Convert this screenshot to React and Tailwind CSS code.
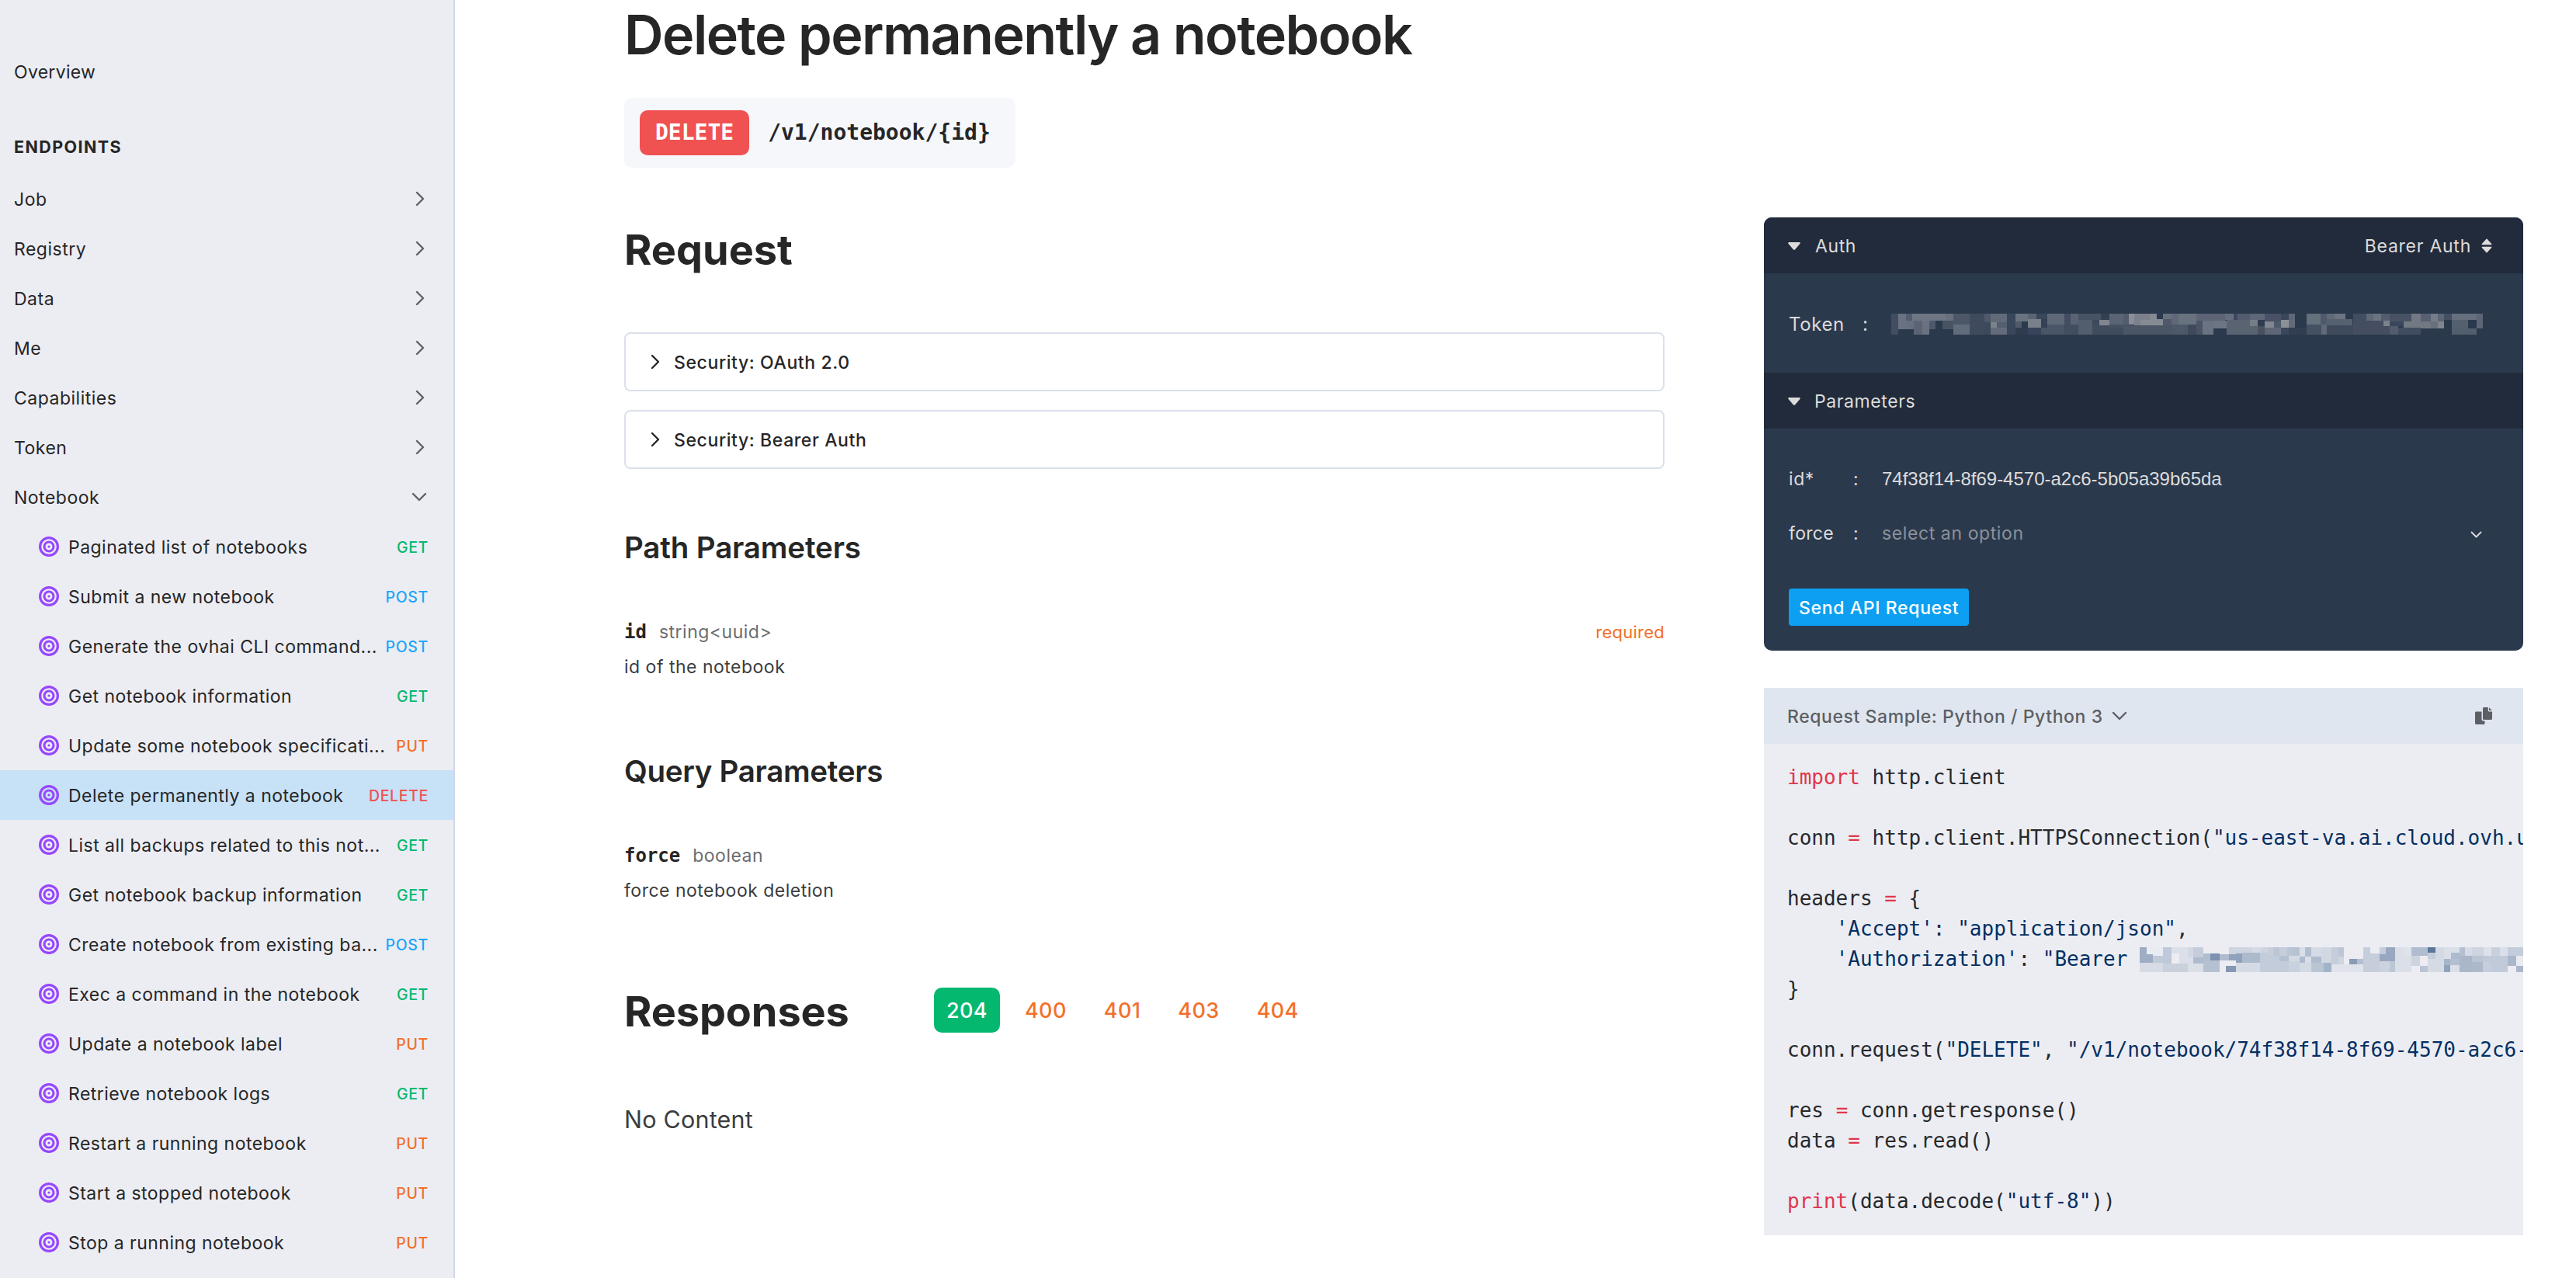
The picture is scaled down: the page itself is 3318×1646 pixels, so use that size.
import React from "react";

const groups = ["Job", "Registry", "Data", "Me", "Capabilities", "Token"];

const endpoints = [
  { name: "Paginated list of notebooks", method: "GET" },
  { name: "Submit a new notebook", method: "POST" },
  { name: "Generate the ovhai CLI command...", method: "POST" },
  { name: "Get notebook information", method: "GET" },
  { name: "Update some notebook specificati...", method: "PUT" },
  { name: "Delete permanently a notebook", method: "DELETE", active: true },
  { name: "List all backups related to this not...", method: "GET" },
  { name: "Get notebook backup information", method: "GET" },
  { name: "Create notebook from existing ba...", method: "POST" },
  { name: "Exec a command in the notebook", method: "GET" },
  { name: "Update a notebook label", method: "PUT" },
  { name: "Retrieve notebook logs", method: "GET" },
  { name: "Restart a running notebook", method: "PUT" },
  { name: "Start a stopped notebook", method: "PUT" },
  { name: "Stop a running notebook", method: "PUT" },
];

const methodColors = {
  GET: "text-[#05b870]",
  POST: "text-[#1ea5fc]",
  PUT: "text-[#f3702a]",
  DELETE: "text-[#f05252]",
};

// Each code line is a list of [kind, text] tokens
const codeLines = [
  [["kw", "import"], ["", " http.client"]],
  [],
  [["", "conn "], ["kw", "="], ["", " http.client.HTTPSConnection("], ["str", '"us-east-va.ai.cloud.ovh.us"'], ["", ")"]],
  [],
  [["", "headers "], ["kw", "="], ["", " {"]],
  [["", "    "], ["str", "'Accept'"], ["", ": "], ["str", '"application/json"'], ["", ","]],
  [["", "    "], ["str", "'Authorization'"], ["", ": "], ["str", '"Bearer '], ["hidden", ""]],
  [["", "}"]],
  [],
  [["", "conn.request("], ["str", '"DELETE"'], ["", ", "], ["str", '"/v1/notebook/74f38f14-8f69-4570-a2c6-5b05a39b65da"'], ["", ")"]],
  [],
  [["", "res "], ["kw", "="], ["", " conn.getresponse()"]],
  [["", "data "], ["kw", "="], ["", " res.read()"]],
  [],
  [["kw", "print"], ["", "(data.decode("], ["str", '"utf-8"'], ["", "))"]],
];

const tokenColors = {
  "": "text-[#26292c]",
  kw: "text-[#e0364a]",
  str: "text-[#032f62]",
};

// Pixelated tokens: [x1, y1, x2, y2, color]
const darkTiles = [
  [12, 30, 30, 110, "#414d60"], [30, 30, 50, 90, "#6a7281"], [50, 30, 66, 57, "#525d6f"], [50, 57, 70, 90, "#667080"],
  [66, 30, 152, 57, "#6f7683"], [152, 30, 173, 57, "#686f7e"], [70, 57, 92, 110, "#5a6475"], [92, 57, 111, 110, "#6a7281"],
  [111, 57, 127, 90, "#4e5a6b"], [145, 57, 173, 90, "#485363"], [173, 30, 215, 72, "#4b5767"], [173, 72, 215, 110, "#626b7a"],
  [215, 30, 253, 110, "#3f4b5d"], [253, 30, 269, 63, "#4e596b"], [253, 63, 269, 110, "#3c485b"], [269, 30, 312, 63, "#606a79"],
  [269, 63, 286, 84, "#7b828c"], [286, 63, 312, 84, "#535e6e"], [269, 84, 312, 110, "#636b7a"], [312, 30, 334, 110, "#3a465a"],
  [334, 30, 366, 60, "#6a7480"], [334, 60, 350, 84, "#4f5a6b"], [334, 84, 366, 110, "#2f3c50"], [366, 30, 388, 51, "#5a6473"],
  [366, 51, 400, 84, "#78808a"], [366, 84, 400, 110, "#36435a"], [388, 30, 416, 51, "#3a475b"], [400, 51, 416, 84, "#344156"],
  [416, 30, 460, 70, "#5e6877"], [400, 84, 416, 110, "#4a5667"], [416, 70, 460, 110, "#4a5667"], [460, 30, 476, 70, "#424d62"],
  [476, 30, 497, 70, "#596374"], [460, 70, 497, 110, "#414d60"], [497, 30, 555, 55, "#475364"], [497, 55, 533, 110, "#525d6d"],
  [533, 54, 551, 110, "#3d495c"], [555, 30, 577, 54, "#333f54"], [551, 54, 577, 75, "#7f868e"], [533, 75, 613, 110, "#404c5e"],
  [577, 30, 613, 72, "#5a6475"], [613, 30, 627, 72, "#525c6f"], [577, 72, 627, 84, "#465162"], [627, 30, 642, 72, "#8a8f97"],
  [642, 30, 681, 75, "#7b808a"], [681, 30, 700, 54, "#858a92"], [613, 75, 780, 110, "#4a5566"], [657, 51, 716, 75, "#858b92"],
  [642, 30, 681, 54, "#7b808a"], [700, 30, 716, 51, "#2b394d"], [716, 30, 738, 51, "#69717f"], [716, 51, 738, 75, "#4e5869"],
  [738, 30, 755, 72, "#5f6878"], [755, 30, 802, 72, "#69727f"], [738, 72, 780, 110, "#4d5869"], [780, 72, 802, 110, "#3e4a5c"],
  [802, 30, 876, 57, "#5c6476"], [876, 30, 899, 54, "#656e7c"], [802, 57, 818, 110, "#4a5466"], [818, 57, 846, 110, "#6a7382"],
  [846, 57, 880, 87, "#6c7581"], [899, 30, 908, 54, "#3c485c"], [908, 30, 940, 54, "#515c6e"], [940, 30, 979, 54, "#5d6777"],
  [880, 54, 961, 110, "#5a6371"], [941, 54, 961, 78, "#757d87"], [961, 54, 979, 78, "#2f3c50"], [961, 78, 979, 110, "#48515f"],
  [979, 30, 1021, 60, "#485166"], [979, 60, 1003, 84, "#808790"], [1003, 60, 1021, 84, "#4e5969"], [979, 84, 1021, 110, "#5f6777"],
  [1021, 30, 1041, 54, "#3a465c"], [1021, 54, 1041, 84, "#8a9096"], [1021, 84, 1041, 110, "#3a465c"], [1041, 30, 1058, 54, "#5f6877"],
  [1041, 54, 1058, 84, "#626b78"], [1041, 84, 1088, 110, "#303d52"], [1088, 30, 1124, 72, "#64707c"], [1088, 72, 1126, 110, "#455163"],
  [1124, 30, 1140, 72, "#4e5a6c"], [1126, 72, 1140, 110, "#5f6977"], [1140, 30, 1160, 51, "#5f6978"], [1160, 30, 1188, 51, "#6c7580"],
  [1140, 51, 1206, 75, "#56616f"], [1140, 75, 1208, 110, "#3f4b5d"], [1208, 30, 1242, 57, "#414d62"], [1208, 57, 1303, 110, "#454e61"],
  [1242, 30, 1260, 57, "#5f6977"], [1260, 30, 1281, 57, "#6b7480"], [1281, 30, 1303, 57, "#535d6f"], [1287, 57, 1303, 78, "#7b828c"],
  [1303, 30, 1359, 60, "#475265"], [1303, 78, 1325, 110, "#525c6d"], [1303, 60, 1339, 78, "#3a465b"], [1325, 84, 1383, 110, "#414c60"],
  [1359, 30, 1383, 60, "#727985"], [1383, 30, 1409, 60, "#576172"], [1339, 60, 1409, 84, "#727983"], [1383, 84, 1443, 87, "#727983"],
  [1409, 30, 1428, 60, "#757d88"], [1409, 60, 1428, 87, "#68707e"], [1428, 30, 1443, 60, "#5d6676"], [1428, 60, 1443, 87, "#7f858e"],
  [1443, 30, 1463, 54, "#454f64"], [1463, 30, 1528, 54, "#666f7d"], [1463, 54, 1506, 87, "#55606f"], [1463, 87, 1528, 110, "#525e6e"],
  [1528, 30, 1544, 87, "#5c6576"],
];

const lightTiles = [
  [48, 30, 75, 90, "#9eadc3"], [75, 30, 138, 63, "#eaecf3"], [75, 57, 99, 90, "#9eadc3"], [99, 63, 138, 90, "#c0cad9"],
  [48, 90, 138, 126, "#d6dbe5"], [138, 30, 171, 93, "#bfc9d9"], [138, 93, 234, 126, "#cbd0dd"], [171, 30, 234, 54, "#dbdfe8"],
  [171, 54, 201, 93, "#ececf2"], [201, 54, 255, 93, "#dbdfe9"], [234, 30, 255, 69, "#d3d9e4"], [255, 30, 294, 69, "#c5cddb"],
  [255, 69, 294, 93, "#aebbcd"], [234, 93, 294, 126, "#dadfe8"], [294, 30, 393, 54, "#ececf1"], [393, 30, 483, 57, "#ced4e0"],
  [294, 54, 321, 81, "#b0bdcf"], [321, 54, 357, 81, "#7c92b0"], [357, 57, 393, 81, "#b0bccd"], [393, 57, 420, 81, "#90a3bc"],
  [294, 81, 357, 126, "#b5c1d2"], [357, 81, 420, 126, "#ececf2"], [381, 102, 420, 126, "#8598b3"], [420, 54, 444, 90, "#8fa1bb"],
  [444, 51, 516, 90, "#adbacc"], [420, 90, 513, 126, "#d5dbe5"], [483, 30, 516, 51, "#d6dbe5"], [516, 30, 543, 51, "#ced4e0"],
  [513, 51, 624, 126, "#c2ccdb"], [543, 30, 564, 63, "#c6cedb"], [564, 30, 588, 63, "#bac6d6"], [588, 30, 618, 63, "#c6cddb"],
  [588, 63, 624, 84, "#b3c0d1"], [618, 30, 639, 63, "#bac6d6"], [639, 30, 666, 63, "#b6c2d2"], [624, 63, 666, 84, "#d3dae3"],
  [624, 84, 666, 126, "#c9d0df"], [666, 30, 687, 66, "#d9dee7"], [687, 30, 711, 66, "#b0bccf"], [711, 30, 750, 66, "#d5dbe4"],
  [750, 30, 789, 90, "#d2d8e2"], [666, 66, 687, 90, "#aebacd"], [687, 66, 711, 90, "#d9dee7"], [711, 66, 750, 90, "#aebacd"],
  [666, 90, 711, 126, "#d4dae4"], [711, 90, 759, 126, "#bac5d4"], [759, 90, 789, 126, "#a2b2c7"], [789, 30, 816, 96, "#c5ccda"],
  [816, 30, 837, 66, "#bcc6d7"], [816, 66, 837, 96, "#ced4e0"], [837, 30, 912, 96, "#ececf2"], [858, 75, 888, 96, "#889bb7"],
  [888, 75, 912, 96, "#b3bfcf"], [789, 96, 912, 126, "#e0e3ec"], [912, 30, 939, 126, "#c6cddb"], [939, 30, 975, 54, "#ecedf2"],
  [939, 54, 975, 126, "#c6cddb"], [975, 30, 999, 57, "#c5ccda"], [999, 30, 1035, 84, "#99a8c0"], [975, 57, 999, 84, "#98a7c0"],
  [975, 84, 1014, 126, "#cdd2df"], [1014, 84, 1035, 126, "#bcc7d6"], [1035, 30, 1098, 126, "#dbdfe8"], [1071, 30, 1098, 63, "#dee3ec"],
  [1098, 30, 1161, 63, "#b0bccf"], [1098, 63, 1131, 102, "#cdd3df"], [1131, 63, 1161, 102, "#ececf2"], [1098, 102, 1131, 126, "#ececf2"],
  [1131, 102, 1161, 126, "#bac5d3"], [1161, 30, 1191, 51, "#5c7799"], [1191, 30, 1224, 75, "#d3dae4"], [1161, 51, 1191, 75, "#c3cdd9"],
  [1161, 75, 1224, 126, "#d4dbe5"], [1224, 30, 1284, 75, "#dadfe8"], [1251, 51, 1284, 75, "#aebbce"], [1224, 75, 1248, 102, "#a6b4c9"],
  [1224, 99, 1248, 126, "#90a2bc"], [1248, 75, 1284, 99, "#b5bfd2"], [1248, 99, 1284, 126, "#dbdfe8"], [1284, 30, 1305, 63, "#b5bfd2"],
  [1305, 30, 1332, 63, "#d6dbe5"], [1332, 30, 1377, 63, "#ced4e0"], [1377, 30, 1407, 63, "#dde1ea"], [1407, 30, 1440, 63, "#c9d0dd"],
  [1440, 30, 1470, 63, "#dbdfe9"], [1470, 30, 1530, 63, "#c3ccda"], [1284, 63, 1332, 126, "#aab7c9"], [1332, 63, 1374, 87, "#bac5d4"],
  [1332, 87, 1374, 126, "#adb9cb"], [1374, 63, 1470, 126, "#c0cad9"], [1374, 87, 1407, 126, "#c6cddc"], [1470, 63, 1503, 102, "#aab7cb"],
  [1503, 63, 1530, 102, "#e9ebf2"], [1470, 102, 1503, 126, "#ececf2"], [1503, 102, 1530, 126, "#aab7cb"],
];

const Redacted = ({ tiles, viewBox, className }) => (
  <svg viewBox={viewBox} preserveAspectRatio="none" shapeRendering="crispEdges" className={className}>
    {tiles.map(([x1, y1, x2, y2, color], idx) => (
      <rect key={idx} x={x1} y={y1} width={x2 - x1} height={y2 - y1} fill={color} />
    ))}
  </svg>
);

const ChevronRight = ({ className }) => (
  <svg viewBox="0 0 12 20" fill="none" stroke="currentColor" strokeWidth="2.4" strokeLinecap="round" strokeLinejoin="round" className={className}>
    <path d="M2 2l8 8-8 8" />
  </svg>
);

const ChevronDown = ({ className }) => (
  <svg viewBox="0 0 20 12" fill="none" stroke="currentColor" strokeWidth="2.4" strokeLinecap="round" strokeLinejoin="round" className={className}>
    <path d="M2 2l8 8 8-8" />
  </svg>
);

const TargetIcon = () => (
  <svg viewBox="0 0 26 26" className="h-[26px] w-[26px] shrink-0 text-[#9747ff]">
    <circle cx="13" cy="13" r="11.4" fill="none" stroke="currentColor" strokeWidth="3.2" />
    <circle cx="13" cy="13" r="6" fill="none" stroke="currentColor" strokeWidth="3.1" />
    <circle cx="13" cy="13" r="1.6" fill="currentColor" />
  </svg>
);

const Caret = () => (
  <svg viewBox="0 0 16 10" className="mt-[2px] h-[10px] w-4">
    <path d="M1.6 0h12.8c1.2 0 1.8 1.2 1 2.1L9.2 9.2c-.7.8-1.7.8-2.4 0L.6 2.1C-.2 1.2.4 0 1.6 0z" fill="currentColor" />
  </svg>
);

const SortIcon = () => (
  <svg viewBox="0 0 14 19" className="h-[19px] w-[14px]">
    <path d="M7 0.3l6.2 6.6c.5.6.1 1.4-.6 1.4H1.4c-.7 0-1.1-.8-.6-1.4z" fill="currentColor" />
    <path d="M7 18.7l6.2-6.6c.5-.6.1-1.4-.6-1.4H1.4c-.7 0-1.1.8-.6 1.4z" fill="currentColor" />
  </svg>
);

const CopyIcon = () => (
  <svg viewBox="0 0 22 22" className="h-[22px] w-[22px]" fill="currentColor">
    <path d="M11.5 0h5.3v4.2c0 .7.5 1.2 1.2 1.2h4v9.2c0 .9-.6 1.5-1.5 1.5h-9c-.9 0-1.5-.6-1.5-1.5V1.5C10 .6 10.6 0 11.5 0z" />
    <path d="M18 .2L21.8 4H18z" />
    <path d="M1.5 5.500h7v9.700c0 1.400 1 2.400 2.400 2.400h1.600v2.900c0 .9-.6 1.500-1.500 1.500H1.500C.6 22 0 21.400 0 20.500V7c0-.9.600-1.500 1.500-1.500z" />
  </svg>
);

const Sidebar = () => (
  <aside className="flex h-full w-[586px] shrink-0 flex-col border-r-2 border-[#d0d8ea] bg-[#ecedf3] pt-[61px] text-[23px] leading-[64px] tracking-[0.5px] text-[#262626]">
    <a className="h-16 px-[18px] tracking-[0.3px]">Overview</a>
    <h4 className="mt-[32px] mb-[3px] h-16 px-[18px] text-[21.5px] font-bold tracking-[1.4px]">ENDPOINTS</h4>
    {groups.map((g) => (
      <div key={g} className="flex h-16 items-center justify-between pr-[37px] pl-[18px]">
        <span className="pt-[2px]">{g}</span>
        <ChevronRight className="h-5 w-3 text-[#5f6166]" />
      </div>
    ))}
    <div className="flex h-16 items-center justify-between pr-[34px] pl-[18px]">
      <span className="pt-[2px]">Notebook</span>
      <ChevronDown className="h-3 w-5 text-[#5f6166]" />
    </div>
    {endpoints.map((e) => (
      <div key={e.name} className={`flex h-16 shrink-0 items-center pr-8 pl-[50px] ${e.active ? "bg-[#c7e1f6]" : ""}`}>
        <TargetIcon />
        <span className="ml-3 flex-1 pt-[2px] tracking-[0.47px] whitespace-nowrap">{e.name}</span>
        <span className={`pt-px text-[19.5px] font-medium tracking-[0.65px] ${methodColors[e.method]}`}>{e.method}</span>
      </div>
    ))}
  </aside>
);

const SecurityRow = ({ label }) => (
  <div className="flex h-[76px] items-center rounded-lg border-2 border-[#dbe0eb] pl-8 text-[23px] font-medium tracking-[0.6px]">
    <ChevronRight className="h-5 w-3" />
    <span className="ml-[18px] pt-[2px]">{label}</span>
  </div>
);

const Param = ({ name, type, description, required }) => (
  <div className="mt-[69px] text-[23px] leading-8 tracking-[0.5px]">
    <div className="flex h-8 items-baseline">
      <span className="font-['DejaVu_Sans_Mono',monospace] text-2xl leading-8 font-bold tracking-normal">{name}</span>
      <span className="ml-4 flex-1 text-[#6b6d70]">{type}</span>
      {required && <span className="text-[22px] tracking-[0.25px] text-[#f3702a]">required</span>}
    </div>
    <p className="mt-[13px] text-[#3b3d40]">{description}</p>
  </div>
);

const Documentation = () => (
  <section className="w-[1340px] shrink-0 pt-[10px]">
    <h2 className="mb-[74px] text-[54px] leading-[64px] font-bold">Request</h2>
    <div className="flex flex-col gap-6">
      <SecurityRow label="Security: OAuth 2.0" />
      <SecurityRow label="Security: Bearer Auth" />
    </div>

    <h3 className="mt-[77px] text-[38.5px] leading-[48px] font-semibold tracking-[-0.15px]">Path Parameters</h3>
    <Param name="id" type="string<uuid>" description="id of the notebook" required />

    <h3 className="mt-[94px] text-[38.5px] leading-[48px] font-semibold tracking-[-0.3px]">Query Parameters</h3>
    <Param name="force" type="boolean" description="force notebook deletion" />

    <div className="mt-[109px] flex h-[58px] items-center">
      <h2 className="w-[399px] pt-[3px] text-[54px] leading-[64px] font-bold tracking-[-0.1px]">Responses</h2>
      <div className="flex gap-4 text-[27px] leading-[58px] font-medium tracking-[0.4px] text-[#f3702a]">
        <span className="h-[58px] rounded-[10px] bg-[#05b870] px-4 pt-px text-white">204</span>
        <span className="px-4 pt-px">400</span>
        <span className="px-4 pt-px">401</span>
        <span className="px-4 pt-px">403</span>
        <span className="px-4 pt-px">404</span>
      </div>
    </div>
    <p className="mt-[92px] text-[30.5px] leading-10 tracking-[0.2px] text-[#3b3d40]">No Content</p>
  </section>
);

const TryIt = () => (
  <div className="overflow-hidden rounded-[10px] bg-[#2b394c] text-[23px] leading-8 tracking-[0.6px] text-[#dcdcdc]">
    <div className="flex h-[72px] items-center bg-[#222b3b] pr-10 pl-[31px]">
      <Caret />
      <span className="ml-[19px] flex-1 pt-[2px]">Auth</span>
      <span className="mr-[13px] pt-[2px] tracking-[0.75px]">Bearer Auth</span>
      <SortIcon />
    </div>
    <div className="flex h-32 items-center pt-[3px] pl-8 text-[24px]">
      <span className="w-[95px]">Token</span>
      <span className="w-[37px]">:</span>
      <Redacted tiles={darkTiles} viewBox="12 30 1532 80" className="h-[27px] w-[762px]" />
    </div>
    <div className="flex h-[72px] items-center bg-[#222b3b] pl-[31px]">
      <Caret />
      <span className="ml-[18px] pt-[2px]">Parameters</span>
    </div>
    <div className="px-8 py-8">
      <div className="flex h-16 items-center">
        <span className="w-[83px] pt-[2px]">id*</span>
        <span className="w-[37px] pt-[2px]">:</span>
        <span className="pt-px font-['Liberation_Sans',sans-serif] text-2xl tracking-normal">74f38f14-8f69-4570-a2c6-5b05a39b65da</span>
      </div>
      <div className="mt-[6px] flex h-16 items-center pr-[21px]">
        <span className="w-[83px] pt-[2px] tracking-[0.3px]">force</span>
        <span className="w-[37px] pt-[2px]">:</span>
        <span className="flex-1 pt-[2px] text-[#8b919a]">select an option</span>
        <ChevronDown className="mt-[5px] h-[9px] w-[15px]" />
      </div>
      <button className="mt-10 flex h-12 items-center rounded bg-[#0c9ff2] px-[13px] pt-[2px] font-medium tracking-[0.65px] text-white">Send API Request</button>
    </div>
  </div>
);

const RequestSample = () => (
  <div className="mt-12 bg-[#ecedf3]">
    <div className="flex h-[72px] items-center bg-[#e0e6f0] pr-10 pl-[30px] text-[#5c5f63]">
      <span className="pt-[2px] text-[23px] font-medium tracking-[0.57px]">Request Sample: Python / Python 3</span>
      <ChevronDown className="ml-[11px] h-3 w-5" />
      <span className="ml-auto">
        <CopyIcon />
      </span>
    </div>
    <div className="overflow-hidden py-6 pl-[30px] font-['DejaVu_Sans_Mono',monospace] text-[26px]">
      {codeLines.map((line, i) => (
        <div key={i} className="flex h-[39px] items-center leading-[39px] whitespace-pre">
          {line.map(([kind, text], j) =>
            kind === "hidden" ? (
              <Redacted key={j} tiles={lightTiles} viewBox="48 30 1482 96" className="h-8 w-[494px] shrink-0" />
            ) : (
              <span key={j} className={tokenColors[kind]}>{text}</span>
            )
          )}
        </div>
      ))}
    </div>
  </div>
);

const App = () => {
  return (
    <div className="flex h-[1646px] w-full overflow-hidden bg-white font-['Inter','Liberation_Sans',sans-serif] text-[#262626]">
      <Sidebar />
      <main className="flex-1 pl-[218px]">
        <h1 className="mt-[5px] text-[70px] leading-[80px] font-semibold tracking-[-1.53px]">Delete permanently a notebook</h1>
        <div className="mt-[41px] flex h-[90px] w-[504px] items-center rounded-[10px] bg-[#f5f7fb] pl-5 font-['DejaVu_Sans_Mono',monospace] text-[28px] font-bold">
          <span className="rounded-[10px] bg-[#f05252] px-5 leading-[58px] text-white">DELETE</span>
          <span className="ml-6">/v1/notebook/{"{id}"}</span>
        </div>
        <div className="mt-16 flex gap-32">
          <Documentation />
          <section className="w-[978px] shrink-0">
            <TryIt />
            <RequestSample />
          </section>
        </div>
      </main>
    </div>
  );
};

export default App;
